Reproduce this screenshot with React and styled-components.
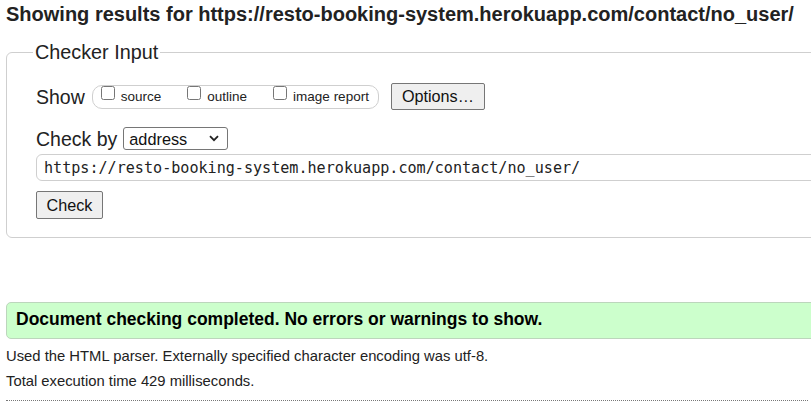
import React from "react";
import styled, { createGlobalStyle } from "styled-components";

const Global = createGlobalStyle`
  html, body {
    margin: 0;
    padding: 0;
    overflow: hidden;
    background: #fff;
  }
  body {
    font-family: "Liberation Sans", Arial, sans-serif;
    color: #222;
  }
`;

const Page = styled.div`
  display: flex;
  flex-direction: column;
  align-items: flex-start;
  padding: 3px 0 0 6px;
  width: 900px;
`;

const Heading = styled.h2`
  margin: 0;
  font-size: 20px;
  line-height: 22px;
  font-weight: bold;
  color: #222;
  white-space: nowrap;
`;

const Fieldset = styled.fieldset`
  margin: 16px 0 0 0;
  width: 840px;
  box-sizing: border-box;
  border: 1px solid #cfcfcf;
  border-radius: 6px;
  padding: 20px 0 18px 29px;
  min-inline-size: 0;
`;

const Legend = styled.legend`
  font-size: 19.8px;
  line-height: 22px;
  padding: 0 2px;
  margin-left: -3px;
  color: #222;
`;

const Body = styled.div`
  display: flex;
  flex-direction: column;
  align-items: flex-start;
`;

const Row = styled.div`
  display: flex;
  align-items: center;
  height: ${(p) => p.$h}px;
  margin-top: ${(p) => p.$mt || 0}px;
`;

const RowLabel = styled.span`
  font-size: 19.5px;
  line-height: 22px;
  color: #222;
  margin-right: ${(p) => p.$gap}px;
`;

const Pill = styled.span`
  display: flex;
  align-items: stretch;
  gap: 26px;
  height: 24px;
  box-sizing: border-box;
  border: 1px solid #cfcfcf;
  border-radius: 10px;
  padding: 0 9px 0 8px;
  margin-right: 12px;
`;

const Option = styled.label`
  display: flex;
  align-items: center;
  gap: 6px;
  font-size: 13.5px;
  line-height: 16px;
  color: #222;
`;

const Box = styled.input.attrs({ type: "checkbox" })`
  width: 14px;
  height: 14px;
  margin: 0;
  align-self: flex-start;
`;

const Button = styled.button`
  font-family: "Liberation Sans", Arial, sans-serif;
  font-size: 16.2px;
  color: #111;
  background: #efefef;
  border: 1px solid #767676;
  border-radius: 2px;
  height: ${(p) => p.$h}px;
  width: ${(p) => p.$w}px;
  padding: 0;
  box-sizing: border-box;
  margin-top: ${(p) => p.$mt || 0}px;
`;

const SelectWrap = styled.span`
  position: relative;
  display: inline-flex;
`;

const Select = styled.select`
  appearance: none;
  -webkit-appearance: none;
  width: 105px;
  height: 23px;
  box-sizing: border-box;
  border: 1px solid #767676;
  border-radius: 3px;
  background: #fff;
  font-family: "Liberation Sans", Arial, sans-serif;
  font-size: 16.3px;
  color: #111;
  padding: 0 0 0 5px;
  margin: 0;
`;

const Chevron = styled.svg`
  position: absolute;
  right: 9px;
  top: 8px;
  pointer-events: none;
`;

const UrlInput = styled.input`
  width: 800px;
  height: 27px;
  box-sizing: border-box;
  margin-top: 4px;
  border: 1px solid #cfcfcf;
  border-radius: 6px;
  padding: 0 0 0 7px;
  font-family: "DejaVu Sans Mono", "Liberation Mono", monospace;
  font-size: 15.1px;
  color: #222;
  background: #fff;
  outline: none;
`;

const Success = styled.div`
  margin-top: 64px;
  width: 840px;
  height: 37px;
  box-sizing: border-box;
  background: #ccffcc;
  border: 1px solid #bcd6bc;
  border-radius: 5px;
  padding: 6px 0 0 9px;
  font-size: 17.5px;
  line-height: 20px;
  font-weight: bold;
  color: #000;
  white-space: nowrap;
`;

const Note = styled.p`
  margin: ${(p) => p.$mt}px 0 0 0;
  font-size: 14.8px;
  line-height: 17px;
  color: #222;
  white-space: nowrap;
`;

const Rule = styled.div`
  margin-top: 10px;
  width: 802px;
  border-top: 1px dotted #777;
`;

export default function App() {
  return (
    <>
      <Global />
      <Page>
        <Heading>
          Showing results for https://resto-booking-system.herokuapp.com/contact/no_user/
        </Heading>
        <Fieldset>
          <Legend>Checker Input</Legend>
          <Body>
            <Row $h={27}>
              <RowLabel $gap={7}>Show</RowLabel>
              <Pill>
                <Option>
                  <Box />
                  source
                </Option>
                <Option>
                  <Box />
                  outline
                </Option>
                <Option>
                  <Box />
                  image report
                </Option>
              </Pill>
              <Button $w={94} $h={27}>Options…</Button>
            </Row>
            <Row $h={23} $mt={17}>
              <RowLabel $gap={6}>Check by</RowLabel>
              <SelectWrap>
                <Select defaultValue="address">
                  <option value="address">address</option>
                  <option value="upload">file upload</option>
                  <option value="text">text input</option>
                </Select>
                <Chevron width="10" height="7" viewBox="0 0 10 7">
                  <path d="M1 1.2 L5 5.2 L9 1.2" fill="none" stroke="#222" strokeWidth="1.8" />
                </Chevron>
              </SelectWrap>
            </Row>
            <UrlInput
              type="url"
              defaultValue="https://resto-booking-system.herokuapp.com/contact/no_user/"
            />
            <Button $w={67} $h={28} $mt={10}>Check</Button>
          </Body>
        </Fieldset>
        <Success>Document checking completed. No errors or warnings to show.</Success>
        <Note $mt={9}>
          Used the HTML parser. Externally specified character encoding was utf-8.
        </Note>
        <Note $mt={8}>Total execution time 429 milliseconds.</Note>
        <Rule />
      </Page>
    </>
  );
}
